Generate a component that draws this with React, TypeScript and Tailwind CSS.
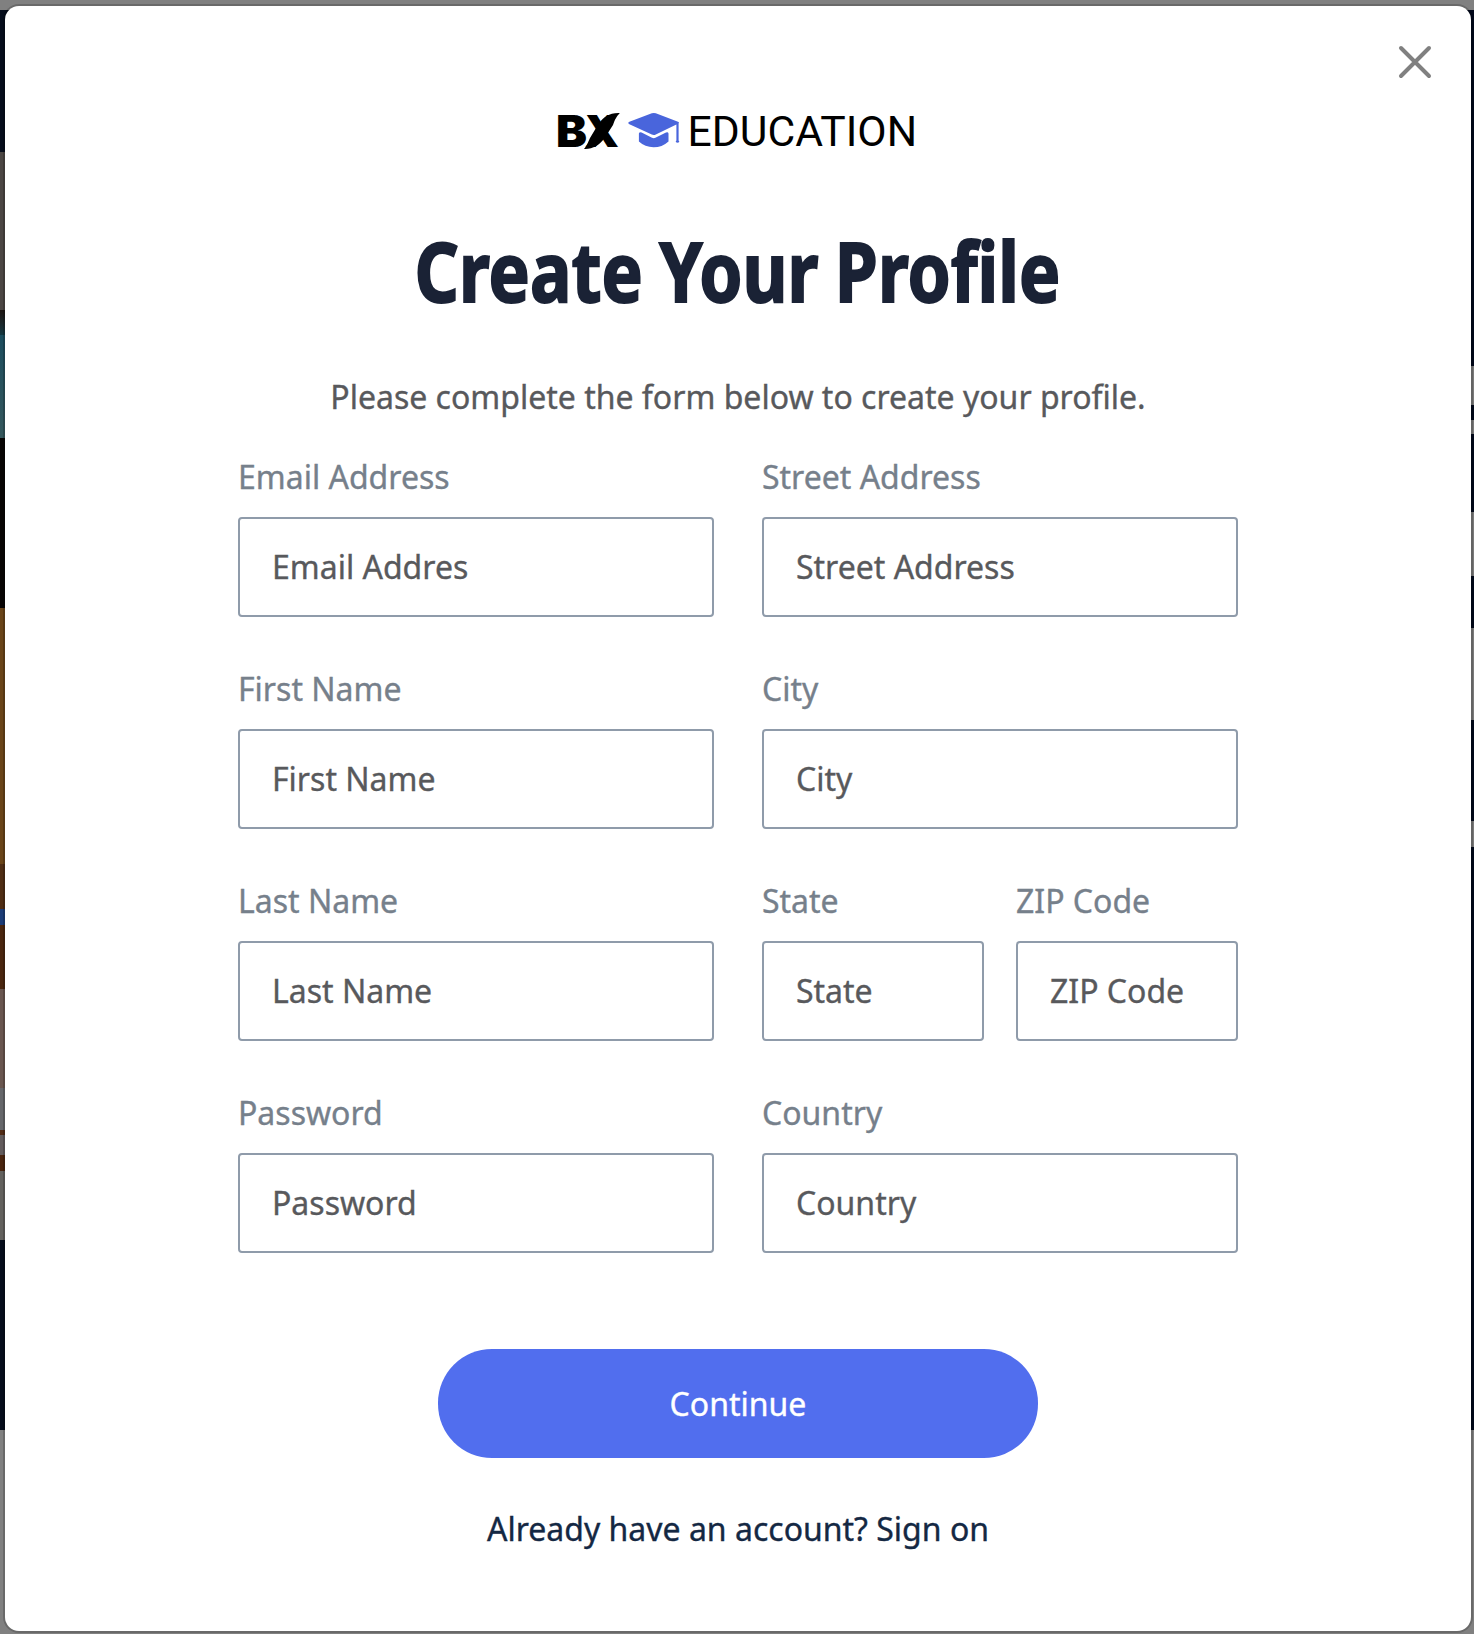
import React from "react";

type FieldProps = { label: string; value?: string };

function Field({ label, value }: FieldProps) {
  return (
    <label className="flex min-w-0 flex-1 flex-col">
      <span className="block h-[62px] leading-[44px] whitespace-nowrap text-[#76808b]">{label}</span>
      <span className="flex h-[100px] items-center rounded-[4px] border-2 border-[#8f9baa] px-[32px] leading-[44px] whitespace-nowrap text-[#58595c]">
        {value ?? label}
      </span>
    </label>
  );
}

function Band({ className }: { className: string }) {
  return <div className={"shrink-0 " + className} />;
}

function Backdrop() {
  return (
    <div className="absolute inset-0 flex flex-col bg-[#808080] pt-[10px]">
      <div className="flex h-[1420px] justify-between">
        <div className="flex w-[24px] flex-col">
          <Band className="h-[142px] bg-[#060d1c]" />
          <Band className="h-[158px] bg-[#4b4643]" />
          <Band className="h-[25px] bg-gradient-to-b from-[#1c1512] to-[#123741]" />
          <Band className="h-[103px] bg-gradient-to-b from-[#1b4d5e] to-[#35575c]" />
          <Band className="h-[170px] bg-[#080504]" />
          <Band className="h-[256px] bg-[#6a4418]" />
          <Band className="h-[45px] bg-[#4f2d14]" />
          <Band className="h-[16px] bg-[#1c3c77]" />
          <Band className="h-[64px] bg-[#4a260f]" />
          <Band className="h-[99px] bg-[#69564f]" />
          <Band className="h-[42px] bg-[#65666a]" />
          <Band className="h-[5px] bg-[#512b15]" />
          <Band className="h-[20px] bg-[#625b5c]" />
          <Band className="h-[16px] bg-[#4a250f]" />
          <Band className="h-[69px] bg-[#63615e]" />
          <Band className="h-[190px] bg-[#060d1c]" />
        </div>
        <div className="flex w-[24px] flex-col bg-[#01081a]">
          <Band className="mt-[356px] h-[39px] bg-[#7b7b7b]" />
          <Band className="mt-[15px] h-[14px] bg-[#7b7b7b]" />
          <Band className="mt-[78px] h-[64px] bg-[#7b7b7b]" />
          <Band className="mt-[52px] h-[92px] bg-[#7b7b7b]" />
          <Band className="mt-[101px] h-[26px] bg-[#7b7b7b]" />
        </div>
      </div>
    </div>
  );
}

function Logo() {
  return (
    <svg width="380" height="60" viewBox="548 100 380 60" className="overflow-visible" role="img" aria-label="BX Education">
      <text x="556" y="147" fontFamily="Inter" fontWeight="900" fontSize="44" textLength="31" lengthAdjust="spacingAndGlyphs">B</text>
      <text x="584.5" y="147" fontFamily="Inter" fontWeight="900" fontSize="44" textLength="34.5" lengthAdjust="spacingAndGlyphs">X</text>
      <path d="M619.8 113C609 112.6 604 117 599 123L590 138C588 142 587 146 584 149C593 149.4 599 145 604 139L613 125C615 119 617 116 619.8 113Z" />
      <g fill="#4965dc">
        <path d="M628.3 122.8Q628 123.6 629.4 124.3L651.8 134.5Q653.8 135.4 655.8 134.4L676.4 124.6V140.6Q675.2 141.6 676 142.3Q677.6 143.1 679 142.3Q679.8 141.6 678.6 140.6V123.6Q679.8 122.6 678 121.8L655.8 113.3Q653.8 112.6 651.8 113.3L629.4 121.8Q628.4 122.2 628.3 122.8Z" />
        <path d="M638.9 133.4Q639.4 131.6 641.6 132.4L652 137.8Q653.8 138.6 655.4 137.8L666 132.4Q668.1 131.6 668.5 133.4V141.4Q662 147.3 653.6 147.3Q645 147.3 638.9 141.6Z" />
      </g>
      <text x="687.6" y="146" fontFamily="Roboto" fontWeight="400" fontSize="42.5" textLength="229.5" lengthAdjust="spacingAndGlyphs">EDUCATION</text>
    </svg>
  );
}

export default function App() {
  return (
    <div className="relative h-[1634px] w-[1474px] overflow-hidden pt-[6px] pl-[5px] font-['Noto_Sans',sans-serif] text-[32px]">
      <Backdrop />
      <main className="relative flex h-[1625px] w-[1466px] flex-col items-center rounded-[14px] bg-white shadow-[0_0_0_2px_rgba(0,0,0,0.18)] [-webkit-text-stroke:0.35px_currentColor]">
        <button className="absolute top-[36px] right-[36px]" aria-label="Close">
          <svg width="40" height="40" viewBox="0 0 40 40" fill="none" stroke="#808080" strokeWidth="4" strokeLinecap="round">
            <path d="M6 6L34 34M34 6L6 34" />
          </svg>
        </button>
        <div className="mt-[94px] h-[60px]">
          <Logo />
        </div>
        <h1 className="mt-[50px] flex h-[120px] w-full justify-center pr-[2px] text-[82.5px] leading-[120px] font-bold whitespace-nowrap text-[#1a2235]">
          <span className="block origin-center scale-x-[0.84] [word-spacing:-2px] [-webkit-text-stroke:2px_currentColor]">Create Your Profile</span>
        </h1>
        <p className="mt-[45px] h-[44px] leading-[44px] text-[#58595c]">
          Please complete the form below to create your profile.
        </p>
        <form className="mt-[36px] flex w-[1000px] flex-col gap-[50px]">
          <div className="flex gap-[48px]">
            <Field label="Email Address" value="Email Addres" />
            <Field label="Street Address" />
          </div>
          <div className="flex gap-[48px]">
            <Field label="First Name" />
            <Field label="City" />
          </div>
          <div className="flex gap-[48px]">
            <Field label="Last Name" />
            <div className="flex min-w-0 flex-1 gap-[32px]">
              <Field label="State" />
              <Field label="ZIP Code" />
            </div>
          </div>
          <div className="flex gap-[48px]">
            <Field label="Password" />
            <Field label="Country" />
          </div>
        </form>
        <button className="mt-[96px] h-[109px] w-[600px] rounded-[54px] bg-[#516eee] leading-[44px] text-white">Continue</button>
        <a className="mt-[49px] leading-[44px] text-[#142843]">Already have an account? Sign on</a>
      </main>
    </div>
  );
}
